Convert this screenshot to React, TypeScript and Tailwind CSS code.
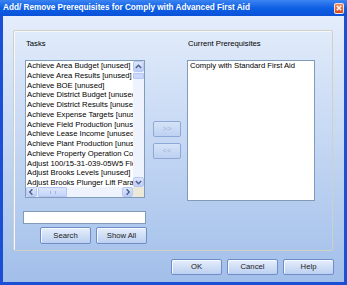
import React from "react";

const tasks = [
  "Achieve Area Budget [unused]",
  "Achieve Area Results [unused]",
  "Achieve BOE [unused]",
  "Achieve District Budget [unused]",
  "Achieve District Results [unused]",
  "Achieve Expense Targets [unused]",
  "Achieve Field Production [unused]",
  "Achieve Lease Income [unused]",
  "Achieve Plant Production [unused]",
  "Achieve Property Operation Costs [unused]",
  "Adjust 100/15-31-039-05W5 Flow",
  "Adjust Brooks Levels [unused]",
  "Adjust Brooks Plunger Lift Parameters",
];

const XpButton = ({
  label,
  disabled,
  className,
}: {
  label: string;
  disabled?: boolean;
  className?: string;
}) => (
  <div
    className={
      "flex items-center justify-center rounded-[2px] border " +
      (disabled
        ? "border-[#8ea8d6] bg-gradient-to-b from-[#d6e3f8] to-[#bdd1f1] text-[#9fb3d8] "
        : "border-[#6f8ec6] bg-gradient-to-b from-[#e6eefb] to-[#bcd0f1] text-[#1a1a1a] shadow-[inset_1px_1px_0_#f4f8ff] ") +
      (className ?? "")
    }
  >
    {label}
  </div>
);

const Arrow = ({ dir }: { dir: "up" | "down" | "left" | "right" }) => {
  const pts = {
    up: "2,6 5,3 8,6",
    down: "2,4 5,7 8,4",
    left: "6,2 3,5 6,8",
    right: "4,2 7,5 4,8",
  }[dir];
  return (
    <svg width="10" height="10" viewBox="0 0 10 10">
      <polyline points={pts} fill="none" stroke="#4d6185" strokeWidth="1.6" />
    </svg>
  );
};

const ScrollBtn = ({ dir, className }: { dir: "up" | "down" | "left" | "right"; className?: string }) => (
  <div
    className={
      "flex items-center justify-center rounded-[2px] border border-[#b7c9f3] bg-gradient-to-b from-[#dce6fd] to-[#bccdf8] " +
      (className ?? "")
    }
  >
    <Arrow dir={dir} />
  </div>
);

export default function App() {
  return (
    <div
      className="flex h-[285px] w-[347px] flex-col overflow-hidden text-[7.7px] text-black"
      style={{ fontFamily: '"Liberation Sans", Arial, sans-serif' }}
    >
      {/* title bar */}
      <div className="flex h-[16px] shrink-0 items-center justify-between bg-gradient-to-b from-[#3b84f2] via-[#0e5fe4] to-[#0a52d8] pl-[3px] pr-[3px]">
        <span className="text-[8.2px] font-bold leading-none text-white">
          Add/ Remove Prerequisites for Comply with Advanced First Aid
        </span>
        <div className="flex h-[11px] w-[10px] items-center justify-center rounded-[2px] border border-white/80 bg-gradient-to-b from-[#f08a5a] to-[#d4461e]">
          <svg width="6" height="6" viewBox="0 0 6 6">
            <path d="M0.8 0.8 L5.2 5.2 M5.2 0.8 L0.8 5.2" stroke="#fff" strokeWidth="1.4" />
          </svg>
        </div>
      </div>

      {/* body */}
      <div className="flex flex-1 flex-col border-x-[3px] border-b-[3px] border-[#1a4fd6] bg-gradient-to-b from-[#e4edfb] to-[#a2bfea] pl-[10px] pt-[14px]">
        <div className="flex h-[221px] w-[320px] rounded-[2px] border border-[#d0d0c4] pl-[9px] pt-[8px] shadow-[inset_1px_1px_0_#f5f8fe]">
          {/* tasks column */}
          <div className="flex w-[124px] flex-col">
            <div className="ml-[3px] h-[10px] leading-[10px]">Tasks</div>
            <div className="ml-[2px] mt-[11px] flex h-[138px] w-[120px] flex-col border border-[#7f9db9] bg-white">
              <div className="flex min-h-0 flex-1">
                <div className="flex-1 overflow-hidden whitespace-nowrap pl-[1px] leading-[9.75px]">
                  {tasks.map((t) => (
                    <div key={t}>{t}</div>
                  ))}
                </div>
                <div className="flex w-[11px] flex-col bg-[#eef3fd]">
                  <ScrollBtn dir="up" className="h-[11px]" />
                  <div className="mt-[1px] h-[6px] rounded-[1px] border border-[#b7c9f3] bg-[#c8d7fb]" />
                  <div className="flex-1" />
                  <ScrollBtn dir="down" className="h-[10px]" />
                </div>
              </div>
              <div className="flex h-[10px]">
                <div className="flex flex-1 bg-[#eef3fd]">
                  <ScrollBtn dir="left" className="w-[11px]" />
                  <div className="ml-[1px] flex w-[29px] items-center justify-center rounded-[1px] border border-[#b7c9f3] bg-gradient-to-b from-[#dce6fd] to-[#c4d4f9]">
                    <div className="h-[3px] w-[6px] border-x border-[#9fb4e4]" />
                  </div>
                  <div className="flex-1" />
                  <ScrollBtn dir="right" className="w-[11px]" />
                </div>
                <div className="w-[11px] bg-[#ece9d8]" />
              </div>
            </div>
            <div className="mt-[13px] h-[13px] w-[123px] border border-[#7f9db9] bg-white" />
            <div className="mt-[3px] flex gap-[5px] pl-[17px]">
              <XpButton label="Search" className="h-[17px] w-[51px]" />
              <XpButton label="Show All" className="h-[17px] w-[51px]" />
            </div>
          </div>

          {/* move buttons */}
          <div className="ml-[6px] flex w-[28px] flex-col gap-[6px] pt-[82px]">
            <XpButton label=">>" disabled className="h-[16px] w-[28px]" />
            <XpButton label="<<" disabled className="h-[16px] w-[28px]" />
          </div>

          {/* current prerequisites */}
          <div className="ml-[6px] flex flex-col">
            <div className="ml-[1px] h-[10px] leading-[10px]">Current Prerequisites</div>
            <div className="mt-[11px] h-[141px] w-[128px] border border-[#7f9db9] bg-white pl-[2px] leading-[9.75px]">
              Comply with Standard First Aid
            </div>
          </div>
        </div>

        <div className="mt-[8px] flex justify-end gap-[5px] pr-[10px]">
          <XpButton label="OK" className="h-[16px] w-[51px]" />
          <XpButton label="Cancel" className="h-[16px] w-[51px]" />
          <XpButton label="Help" className="h-[16px] w-[51px]" />
        </div>
      </div>
    </div>
  );
}
